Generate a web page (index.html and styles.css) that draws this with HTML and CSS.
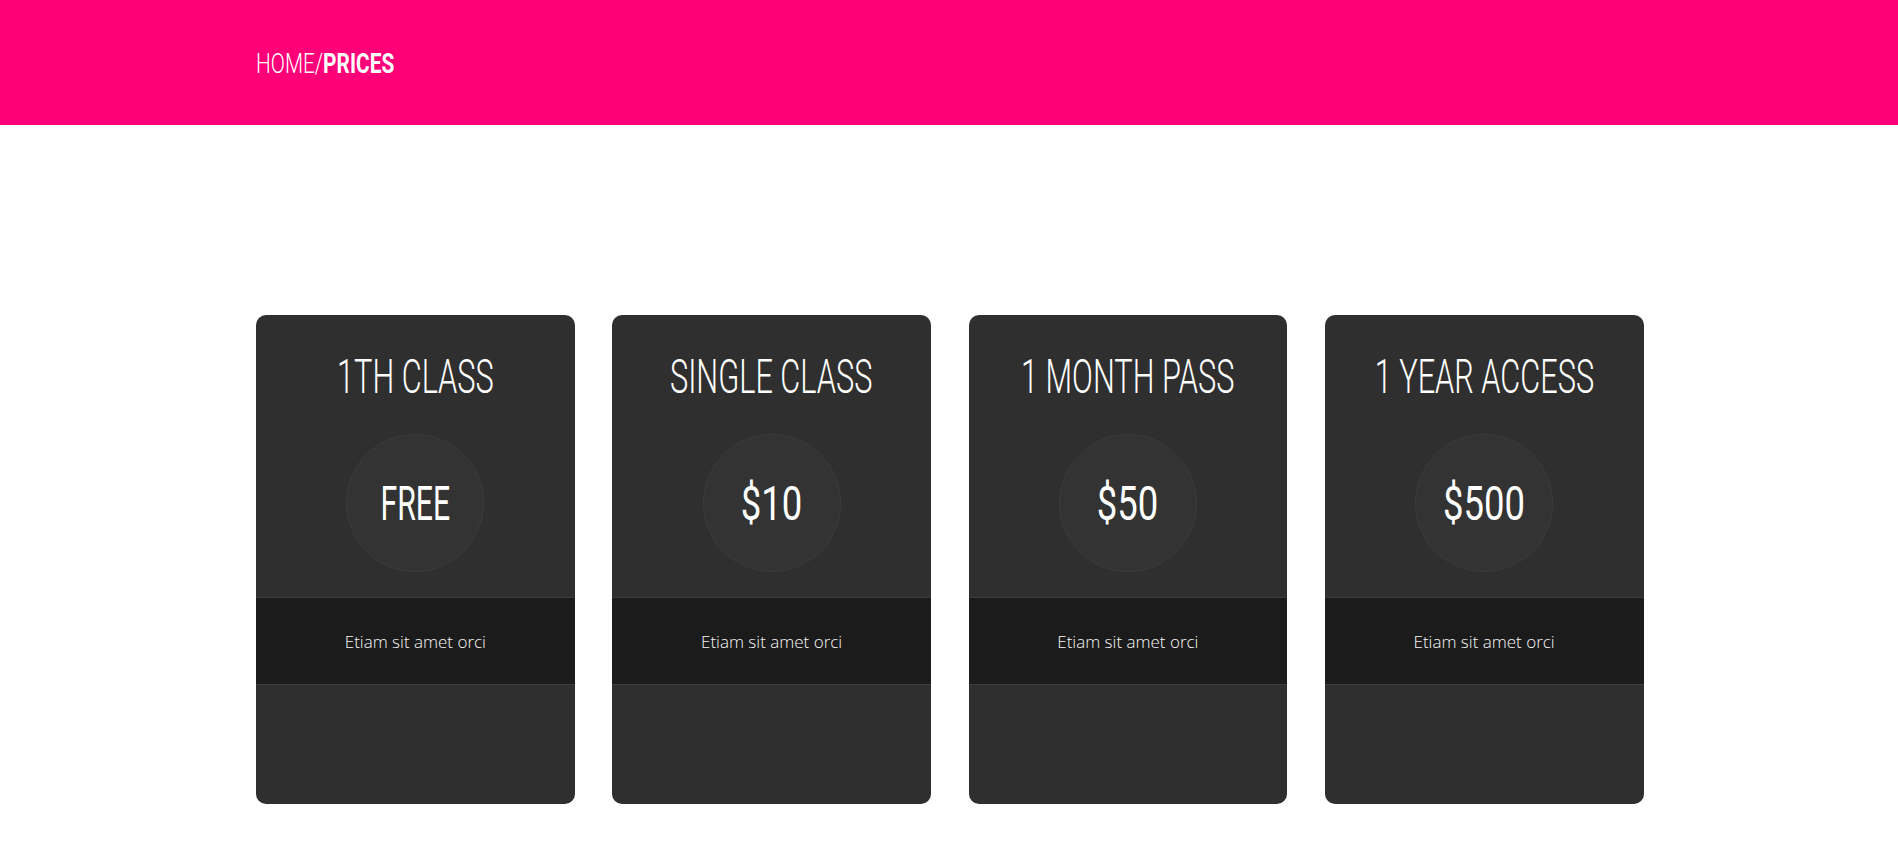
FILE: index.html
```html
<!DOCTYPE html>
<html>
<head>
<meta charset="utf-8">
<link rel="stylesheet" href="styles.css">
</head>
<body>
<header class="topbar">
  <div class="crumbs"><span class="sq"><span class="home">HOME/</span><span class="strong">PRICES</span></span></div>
</header>
<main class="prices">
  <div class="card">
    <div class="card-top">
      <h2 class="title"><span class="sq">1TH CLASS</span></h2>
      <div class="circle"><span class="sq">FREE</span></div>
    </div>
    <div class="band">Etiam sit amet orci</div>
    <div class="card-foot"></div>
  </div>
  <div class="card">
    <div class="card-top">
      <h2 class="title"><span class="sq">SINGLE CLASS</span></h2>
      <div class="circle"><span class="sq num">$10</span></div>
    </div>
    <div class="band">Etiam sit amet orci</div>
    <div class="card-foot"></div>
  </div>
  <div class="card">
    <div class="card-top">
      <h2 class="title"><span class="sq">1 MONTH PASS</span></h2>
      <div class="circle"><span class="sq num">$50</span></div>
    </div>
    <div class="band">Etiam sit amet orci</div>
    <div class="card-foot"></div>
  </div>
  <div class="card">
    <div class="card-top">
      <h2 class="title"><span class="sq">1 YEAR ACCESS</span></h2>
      <div class="circle"><span class="sq num">$500</span></div>
    </div>
    <div class="band">Etiam sit amet orci</div>
    <div class="card-foot"></div>
  </div>
</main>
</body>
</html>
```
FILE: styles.css
```css
html, body { margin: 0; padding: 0; background: #fff; }
body { font-family: Roboto, "DejaVu Sans Condensed", sans-serif; }
.sq { display: inline-block; }
.topbar {
  background: #ff0078;
  height: 125px;
  box-sizing: border-box;
  padding: 0 256px;
  display: flex;
  align-items: center;
}
.crumbs {
  color: #fff;
  font-size: 28px;
  line-height: 1;
  margin-top: 2px;
  white-space: nowrap;
}
.crumbs .sq { transform: scaleX(0.745); transform-origin: left center; }
.crumbs .home { font-weight: 300; }
.crumbs .strong { font-weight: bold; }
.prices {
  display: flex;
  gap: 37.5px;
  padding: 190px 256px 0;
}
.card {
  width: 318.75px;
  flex: none;
  height: 489px;
  background: #2f2f2f;
  border-radius: 10px;
  overflow: hidden;
  display: flex;
  flex-direction: column;
}
.card-top {
  height: 282px;
  display: flex;
  flex-direction: column;
  align-items: center;
}
.title {
  margin: 36px 0 0;
  color: #fff;
  font-weight: 300;
  font-size: 48px;
  line-height: 52px;
  white-space: nowrap;
}
.title .sq { transform: scaleX(0.64); }
.circle {
  margin-top: 31px;
  width: 136px;
  height: 136px;
  border-radius: 50%;
  background: #333;
  border: 1px solid #3c3c3c;
  display: flex;
  align-items: center;
  justify-content: center;
  color: #fff;
  font-size: 48px;
  font-weight: 400;
}
.circle .sq { transform: scaleX(0.63); }
.circle .num { transform: scaleX(0.76); }
.band {
  height: 86px;
  background: #1b1b1b;
  border-top: 1px solid #3d3d3d;
  border-bottom: 1px solid #3d3d3d;
  display: flex;
  align-items: center;
  justify-content: center;
  color: #f7f7f7;
  font-family: "Open Sans", sans-serif;
  font-weight: 300;
  font-size: 17px;
}
.card-foot { flex: 1; }
```
